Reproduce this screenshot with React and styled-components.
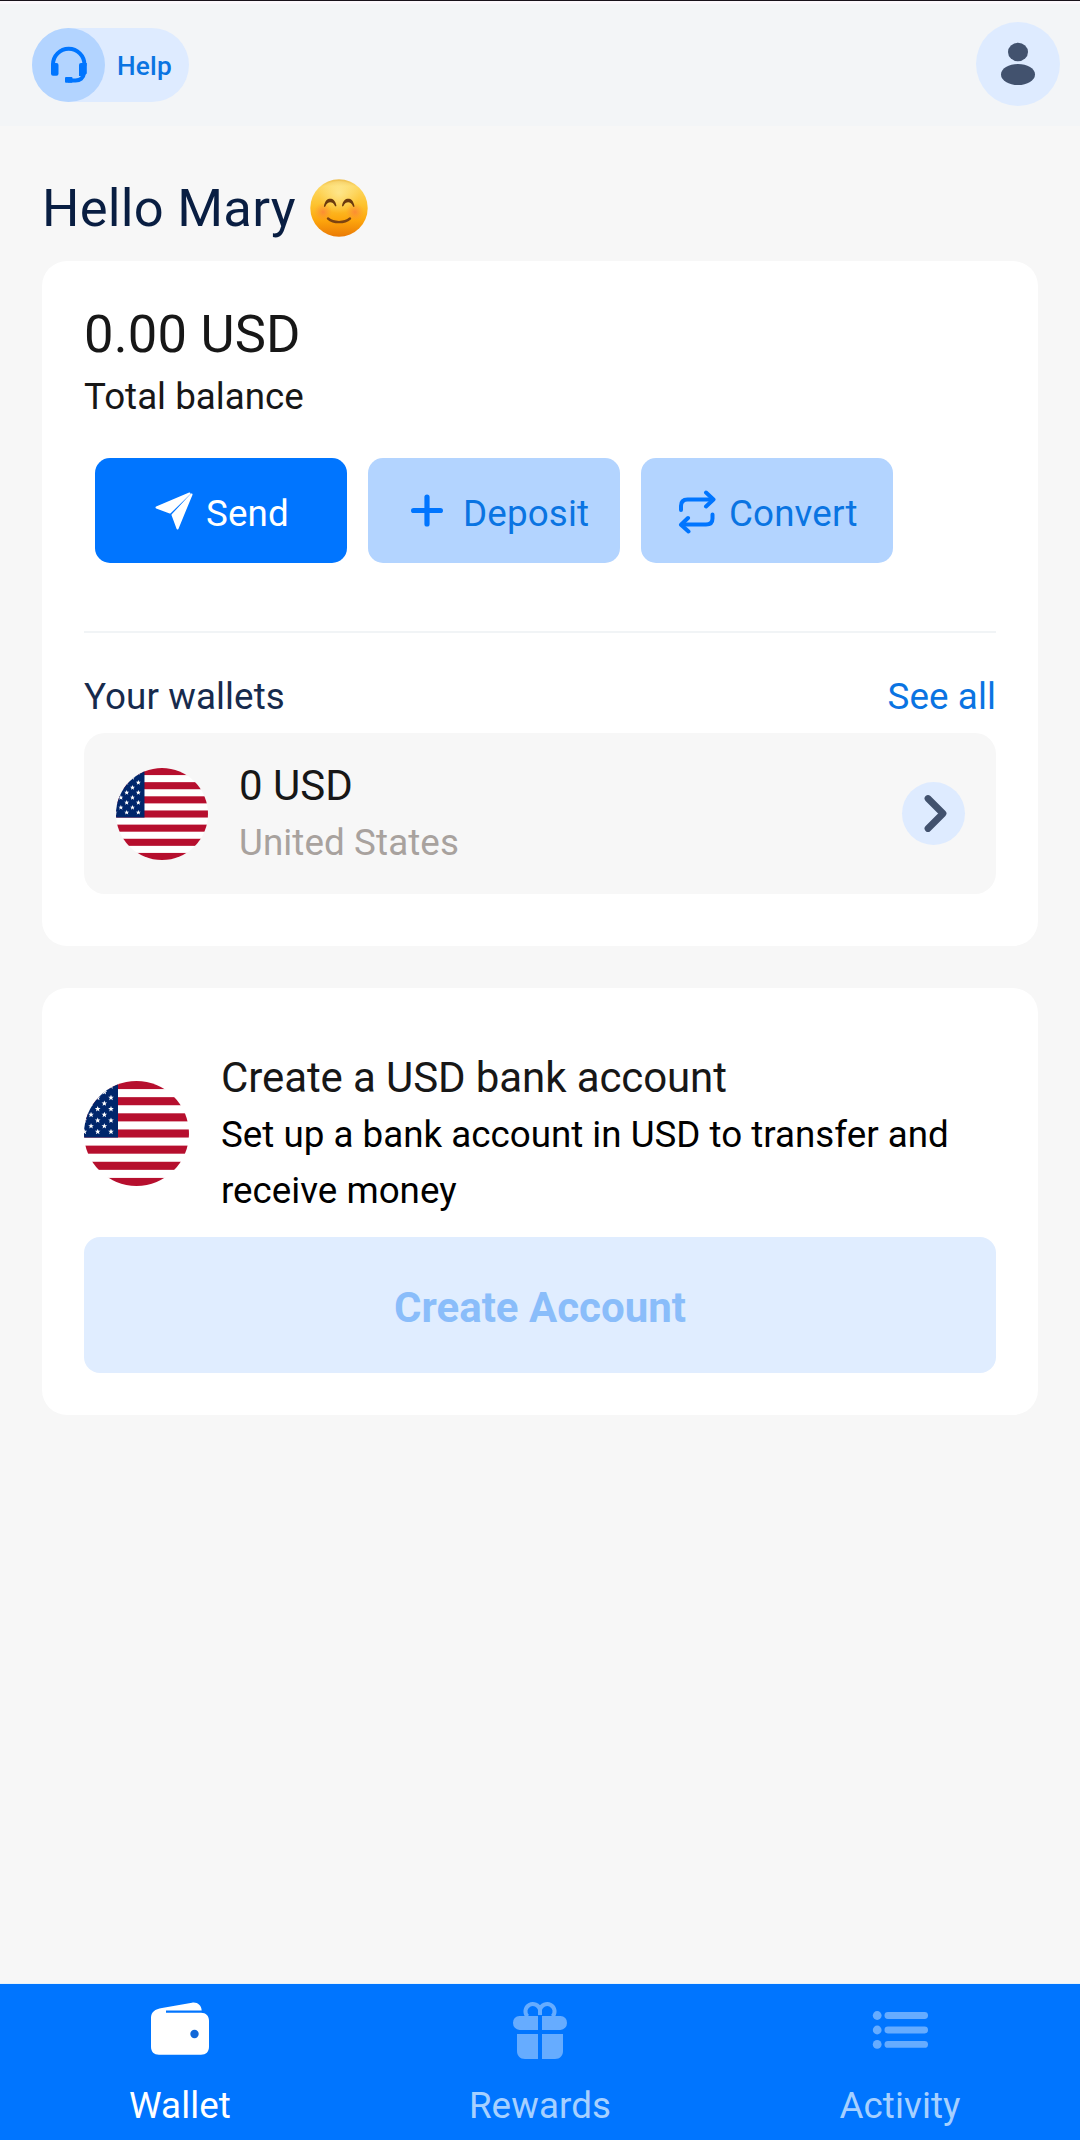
import React from 'react'
import styled, { createGlobalStyle, css } from 'styled-components'

const colors = {
  primary: '#0075ff',
  link: '#0a74e2',
  soft: '#b3d4ff',
  pale: '#deebff',
  navy: '#091e42',
  slate: '#42526e',
  page: '#f7f7f7',
}

const GlobalStyle = createGlobalStyle`
  * {
    box-sizing: border-box;
  }

  body {
    margin: 0;
    background: ${colors.page};
    font-family: Roboto, sans-serif;
  }

  button {
    border: 0;
    padding: 0;
    font-family: inherit;
  }
`

const Screen = styled.div`
  width: 1080px;
  height: 2140px;
  display: flex;
  flex-direction: column;
  background: ${colors.page};
`

const Header = styled.header`
  height: 126px;
  padding: 27px 20px 0 32px;
  display: flex;
  justify-content: space-between;
  align-items: flex-start;
  border-top: 1px solid #17121a;
  background: #f3f5f7;
  box-shadow: inset 0 3px 0 #fbf8fc;
`

const HelpButton = styled.button`
  width: 157px;
  height: 74px;
  padding-top: 1px;
  display: flex;
  align-items: center;
  border-radius: 37px;
  background: ${colors.pale};
  color: ${colors.link};
  font-size: 26.25px;
  font-weight: 500;
  letter-spacing: 0.2px;
`

const HelpIcon = styled.span`
  width: 73px;
  height: 74px;
  margin: -1px 12px 0 0;
  border-radius: 50%;
  background: ${colors.soft};
`

const Avatar = styled.div`
  width: 84px;
  height: 84px;
  margin-top: -6px;
  border-radius: 50%;
  background: ${colors.pale};
`

const Main = styled.main`
  flex: 1;
  padding: 0 42px;
`

const Greeting = styled.h1`
  margin: 0;
  padding: 46px 0 17px;
  display: flex;
  align-items: center;
  gap: 14px;
  color: ${colors.navy};
  font-size: 52.5px;
  font-weight: 400;
  line-height: 72px;
  letter-spacing: 0.25px;
`

const Card = styled.section`
  padding: ${props => props.$padding};
  border-radius: 25px;
  background: #fff;

  & + & {
    margin-top: 42px;
  }
`

const Amount = styled.div`
  color: #171717;
  font-size: 52.5px;
  line-height: 62px;
  letter-spacing: 0.2px;
`

const Caption = styled.div`
  margin-top: 4px;
  color: #171717;
  font-size: 36.75px;
  line-height: 56px;
`

const Actions = styled.div`
  display: flex;
  gap: 21px;
  margin: 33px 0 68px;
  padding-left: 11px;
`

const Action = styled.button`
  width: 252px;
  height: 105px;
  display: flex;
  align-items: center;
  padding-left: ${props => props.$left}px;
  gap: ${props => props.$gap}px;
  border-radius: 15px;
  background: ${colors.soft};
  color: ${colors.link};
  font-size: 36.75px;
  letter-spacing: 0.15px;

  span {
    padding-top: 6px;
  }

  ${props => props.$primary && css`
    background: ${colors.primary};
    color: #fff;
  `}
`

const Divider = styled.hr`
  height: 2px;
  margin: 0 0 36px;
  border: 0;
  background: #f1f4f6;
`

const WalletsHead = styled.div`
  display: flex;
  justify-content: space-between;
  margin-bottom: 8px;
  color: #172b4d;
  font-size: 36.75px;
  line-height: 56px;
  letter-spacing: 0.1px;

  a {
    color: ${colors.link};
  }
`

const WalletRow = styled.div`
  height: 161px;
  padding: 0 31px 0 32px;
  display: flex;
  align-items: center;
  border-radius: 21px;
  background: ${colors.page};
`

const WalletInfo = styled.div`
  flex: 1;
  padding: 1px 0 0 31px;
  color: #171717;
  font-size: 42px;
  line-height: 57px;

  small {
    display: block;
    color: #a8a29e;
    font-size: 36.75px;
    letter-spacing: 0.1px;
  }
`

const RoundArrow = styled.div`
  width: 63px;
  height: 63px;
  border-radius: 50%;
  background: ${colors.pale};
`

const Offer = styled.div`
  display: flex;
  align-items: flex-start;
  gap: 32px;
  margin-bottom: 18px;

  > svg {
    margin-top: 32px;
  }
`

const OfferTitle = styled.h2`
  margin: 0 0 1px;
  color: #171717;
  font-size: 42px;
  font-weight: 400;
  line-height: 57px;
  letter-spacing: -0.1px;
`

const OfferText = styled.p`
  margin: 0;
  color: #000;
  font-size: 36.75px;
  line-height: 56px;
`

const CreateButton = styled.button`
  width: 100%;
  height: 136px;
  padding-top: 5px;
  border-radius: 16px;
  background: #e0edff;
  color: #8abdfa;
  font-size: 42px;
  font-weight: 700;
`

const TabBar = styled.nav`
  height: 156px;
  display: grid;
  grid-template-columns: repeat(3, 1fr);
  background: ${colors.primary};
  box-shadow: 0 -1px 0 #e4f2fb;
`

const Tab = styled.a`
  display: flex;
  flex-direction: column;
  align-items: center;
  padding-top: 16px;
  color: ${props => props.$active ? '#fff' : '#a6d0ff'};
  font-size: 36.75px;
  line-height: 50px;
  letter-spacing: 0.1px;

  svg {
    margin-bottom: 21px;
    color: ${props => props.$active ? '#fff' : '#66acff'};
  }
`

const HeadsetIcon = () => (
  <svg width="73" height="74" viewBox="0 0 73 74" fill="none" stroke={colors.primary} strokeWidth="4">
    <path d="M21 38v-1.500a15.700 15.700 0 0 1 31.400 0V38" />
    <path d="M52 45c-.5 5-4 7.500-8.500 7.500H36" />
    <rect x="19" y="35" width="7.500" height="12.700" rx="2" fill={colors.primary} stroke="none" />
    <path d="M47 37a2 2 0 0 1 2-2h5.800v10.500L51.500 48H47z" fill={colors.primary} stroke="none" />
    <rect x="33" y="49" width="7.500" height="5.800" rx="1" fill={colors.primary} stroke="none" />
  </svg>
)

const UserIcon = () => (
  <svg width="84" height="84" viewBox="0 0 84 84" fill={colors.slate}>
    <ellipse cx="42" cy="30" rx="10" ry="9.300" />
    <ellipse cx="42" cy="52.500" rx="17" ry="10.500" />
  </svg>
)

const SmileIcon = () => (
  <svg width="58" height="58" viewBox="0 0 58 58" fill="none" strokeLinecap="round">
    <defs>
      <linearGradient id="face" x1="0" y1="0" x2="0" y2="1">
        <stop offset="0" stopColor="#eebf50" />
        <stop offset="0.12" stopColor="#fdd965" />
        <stop offset="0.45" stopColor="#fdc22e" />
        <stop offset="0.72" stopColor="#fda50c" />
        <stop offset="1" stopColor="#ea7a06" />
      </linearGradient>
      <radialGradient id="glow" cx="0.5" cy="0.22" r="0.38">
        <stop offset="0" stopColor="#fff1a8" stopOpacity="0.65" />
        <stop offset="1" stopColor="#fff1a8" stopOpacity="0" />
      </radialGradient>
      <radialGradient id="blush">
        <stop offset="0" stopColor="#fb7b3c" stopOpacity="0.7" />
        <stop offset="1" stopColor="#fb8b3c" stopOpacity="0" />
      </radialGradient>
    </defs>
    <circle cx="29" cy="29" r="28.700" fill="url(#face)" />
    <circle cx="29" cy="29" r="27" fill="url(#glow)" />
    <circle cx="13" cy="33" r="9" fill="url(#blush)" />
    <circle cx="45" cy="33" r="9" fill="url(#blush)" />
    <path d="M13.900 27.300C15 21.500 17.500 19.800 20.200 19.800S25.300 21.500 26.400 26.500Q26.200 28 25 27C23.800 24 22 23.200 20.200 23.200S16.500 24.300 15.300 27.500Q14.300 28.500 13.900 27.300z" fill="#6b3a0e" />
    <path d="M32 26.500C33.100 21.500 35.500 19.800 38.200 19.800S43.400 21.500 44.500 27.300Q44.100 28.500 43.100 27.500C41.900 24.300 40 23.200 38.200 23.200S34.600 24 33.400 27Q32.200 28 32 26.500z" fill="#6b3a0e" />
    <path d="M18 39.500c5.500 4.800 16.500 4.800 22 0" stroke="#7d4310" strokeWidth="2.400" />
  </svg>
)

const SendIcon = () => (
  <svg width="38" height="38" viewBox="0 0 38 38" fill="#fff" stroke="#fff" strokeWidth="2" strokeLinejoin="round">
    <path d="M1.500 15.500L34.500 1.500L15 20.500z" />
    <path d="M36.500 2.500L17.500 23L22.500 36.500z" />
  </svg>
)

const PlusIcon = () => (
  <svg width="32" height="38" viewBox="0 0 32 38" stroke={colors.primary} strokeWidth="5.200" strokeLinecap="round">
    <path d="M2.600 18.500h26.800M16 5v27" />
  </svg>
)

const ConvertIcon = () => (
  <svg width="38" height="46" viewBox="0 0 38 46" fill="none" stroke={colors.primary} strokeWidth="4" strokeLinecap="round" strokeLinejoin="round">
    <path d="M3 22v-4q0-6.500 6.500-6.500H34" />
    <path d="M28 4.500l7.500 7l-7.500 7" />
    <path d="M34.500 26.500v4q0 6-6.500 6H4" />
    <path d="M10 30l-7 6.800l7.500 6.700" />
  </svg>
)

const ChevronIcon = () => (
  <svg width="63" height="63" viewBox="0 0 63 63" fill="none" stroke={colors.slate} strokeWidth="6.800" strokeLinecap="round" strokeLinejoin="round">
    <path d="M26 16.500l15 15L26 46.500" />
  </svg>
)

const WalletIcon = () => (
  <svg width="60" height="60" viewBox="0 0 60 60" fill="currentColor">
    <path d="M12 8L42 2.700C47 1.800 51.500 5 51.700 10.500H16v2.300h35c5 0 8 3 8 8v26c0 5-3 8-8 8H9c-5 0-8-3-8-8V18c0-6 4-9 11-10z" />
    <circle cx="44.500" cy="34" r="4.200" fill="#1268d8" />
  </svg>
)

const GiftIcon = () => (
  <svg width="60" height="60" viewBox="0 0 60 60" fill="currentColor">
    <path d="M28 16H9.500a6.500 6.500 0 0 0-6.500 7a7 7 0 0 0 6.500 7H28zM32 16h18.500a6.500 6.500 0 0 1 6.500 7a7 7 0 0 1-6.500 7H32z" />
    <path d="M7 34h21v25H15c-5 0-8-3.500-8-8zM32 34h21v17c0 4.500-3 8-8 8H32z" />
    <path d="M17.500 16.500A7.400 7.400 0 1 1 30 9.500V15M42.500 16.500A7.400 7.400 0 1 0 30 9.500V15" fill="none" stroke="currentColor" strokeWidth="4" />
  </svg>
)

const ListIcon = () => (
  <svg width="60" height="60" viewBox="0 0 60 60" fill="currentColor">
    {[15.500, 30, 44.400].map(y => (
      <g key={y}>
        <circle cx="7.200" cy={y} r="4.400" />
        <rect x="14.500" y={y - 3.400} width="43.500" height="6.800" rx="3.400" />
      </g>
    ))}
  </svg>
)

const STAR = 'M0-2.900L.8-.9L2.800-.9L1.200.4L1.800 2.500L0 1.300L-1.800 2.500L-1.200.4L-2.800-.9L-.8-.9z'

const Flag = ({ size, canton = 34 }) => {
  const id = `flag-${size}`
  const stripe = 105 / 13
  const stars = []
  for (let col = 0; col < 5; col++) {
    for (let row = col % 2; row < 9; row += 2) {
      stars.push([canton - 7 - col * 6.65, 50.7 - row * 5.67])
    }
  }

  return (
    <svg width={size} height={size} viewBox="0 0 105 105">
      <clipPath id={id}><circle cx="52.500" cy="52.500" r="52.500" /></clipPath>
      <g clipPath={`url(#${id})`}>
        <rect width="105" height="105" fill="#fff" />
        {[0, 2, 4, 6, 8, 10, 12].map(i => (
          <rect key={i} y={i * stripe} width="105" height={stripe} fill="#b60f2e" />
        ))}
        <rect width={canton} height={stripe * 7} fill="#00266b" />
        {stars.map(([x, y]) => (
          <path key={`${x} ${y}`} d={STAR} transform={`translate(${x} ${y})`} fill="#fff" />
        ))}
      </g>
    </svg>
  )
}

const tabs = [
  { title: 'Wallet', icon: <WalletIcon />, active: true },
  { title: 'Rewards', icon: <GiftIcon /> },
  { title: 'Activity', icon: <ListIcon /> },
]

const App = () => (
  <>
    <GlobalStyle />
    <Screen>
      <Header>
        <HelpButton>
          <HelpIcon><HeadsetIcon /></HelpIcon>
          Help
        </HelpButton>
        <Avatar><UserIcon /></Avatar>
      </Header>

      <Main>
        <Greeting>Hello Mary <SmileIcon /></Greeting>

        <Card $padding="42px 42px 52px">
          <Amount>0.00 USD</Amount>
          <Caption>Total balance</Caption>
          <Actions>
            <Action $primary $left={60} $gap={13}><SendIcon /><span>Send</span></Action>
            <Action $left={43} $gap={20}><PlusIcon /><span>Deposit</span></Action>
            <Action $left={37} $gap={13}><ConvertIcon /><span>Convert</span></Action>
          </Actions>
          <Divider />
          <WalletsHead>
            <span>Your wallets</span>
            <a>See all</a>
          </WalletsHead>
          <WalletRow>
            <Flag size={92} canton={32.5} />
            <WalletInfo>0 USD<small>United States</small></WalletInfo>
            <RoundArrow><ChevronIcon /></RoundArrow>
          </WalletRow>
        </Card>

        <Card $padding="61px 42px 42px">
          <Offer>
            <Flag size={105} />
            <div>
              <OfferTitle>Create a USD bank account</OfferTitle>
              <OfferText>Set up a bank account in USD to transfer and<br />receive money</OfferText>
            </div>
          </Offer>
          <CreateButton>Create Account</CreateButton>
        </Card>
      </Main>

      <TabBar>
        {tabs.map(x => <Tab key={x.title} $active={x.active}>{x.icon}{x.title}</Tab>)}
      </TabBar>
    </Screen>
  </>
)

export default App
